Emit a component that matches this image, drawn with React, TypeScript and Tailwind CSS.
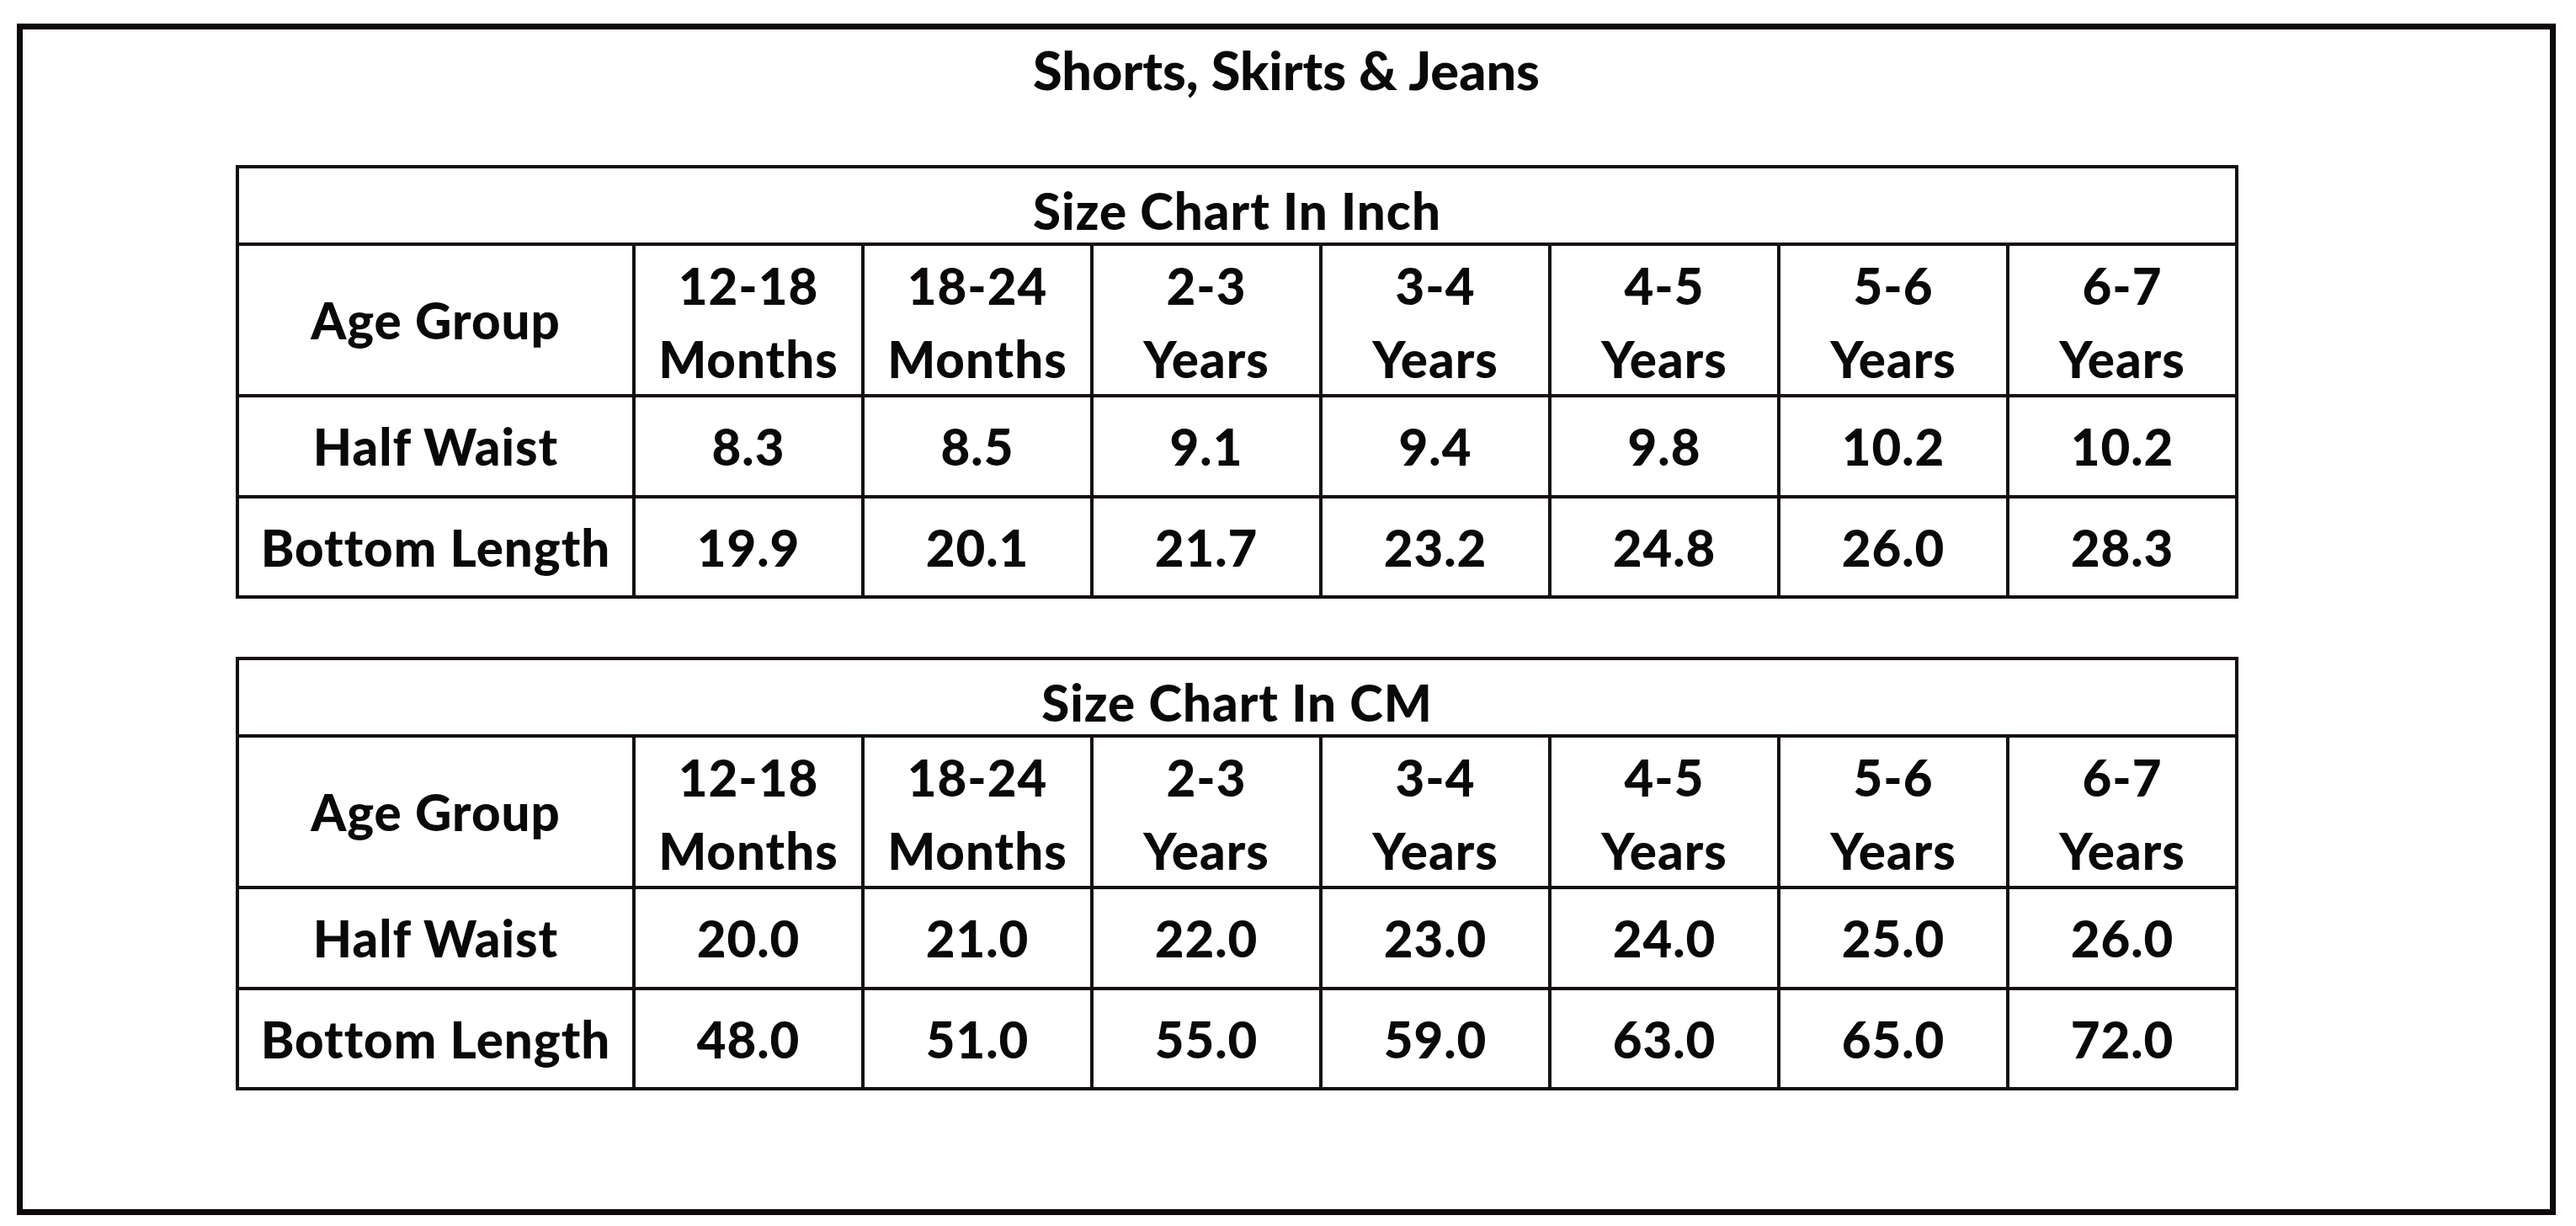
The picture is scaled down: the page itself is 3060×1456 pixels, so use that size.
import React from "react";

const ages: [string, string][] = [
  ["12-18", "Months"],
  ["18-24", "Months"],
  ["2-3", "Years"],
  ["3-4", "Years"],
  ["4-5", "Years"],
  ["5-6", "Years"],
  ["6-7", "Years"],
];

type TableProps = {
  title: string;
  waist: string[];
  length: string[];
  className: string;
};

function SizeTable({ title, waist, length, className }: TableProps) {
  return (
    <div
      className={
        "ml-[253px] w-[2379px] grid grid-cols-[467px_repeat(7,268px)] gap-[4px] bg-[#150e11] p-[4px] " +
        className
      }
    >
      <div className="col-span-8 h-[88px] bg-white flex items-center justify-center pt-[12px]">
        {title}
      </div>
      <div className="h-[176px] bg-white flex items-center justify-center">Age Group</div>
      {ages.map(([a, b]) => (
        <div
          key={a}
          className="h-[176px] bg-white flex flex-col items-center justify-center leading-[87px] pt-[6px]"
        >
          <span>{a}</span>
          <span>{b}</span>
        </div>
      ))}
      <div className="h-[116px] bg-white flex items-center justify-center">Half Waist</div>
      {waist.map((v, i) => (
        <div key={i} className="h-[116px] bg-white flex items-center justify-center">
          {v}
        </div>
      ))}
      <div className="h-[115px] bg-white flex items-center justify-center">Bottom Length</div>
      {length.map((v, i) => (
        <div key={i} className="h-[115px] bg-white flex items-center justify-center">
          {v}
        </div>
      ))}
    </div>
  );
}

export default function App() {
  return (
    <div className="w-[3060px] h-[1456px] bg-white pt-[28px] pl-[20px] font-[family-name:Lato,sans-serif] font-black text-[#0b0809]">
      <div className="w-[3016px] h-[1415px] border-[7px] border-[#0e0a0c]">
        <div className="pt-[16px] text-center text-[63px] leading-none">Shorts, Skirts &amp; Jeans</div>
        <div className="text-[60px] leading-none tracking-[1px]">
          <SizeTable
            className="mt-[82px]"
            title="Size Chart In Inch"
            waist={["8.3", "8.5", "9.1", "9.4", "9.8", "10.2", "10.2"]}
            length={["19.9", "20.1", "21.7", "23.2", "24.8", "26.0", "28.3"]}
          />
          <SizeTable
            className="mt-[69px]"
            title="Size Chart In CM"
            waist={["20.0", "21.0", "22.0", "23.0", "24.0", "25.0", "26.0"]}
            length={["48.0", "51.0", "55.0", "59.0", "63.0", "65.0", "72.0"]}
          />
        </div>
      </div>
    </div>
  );
}
